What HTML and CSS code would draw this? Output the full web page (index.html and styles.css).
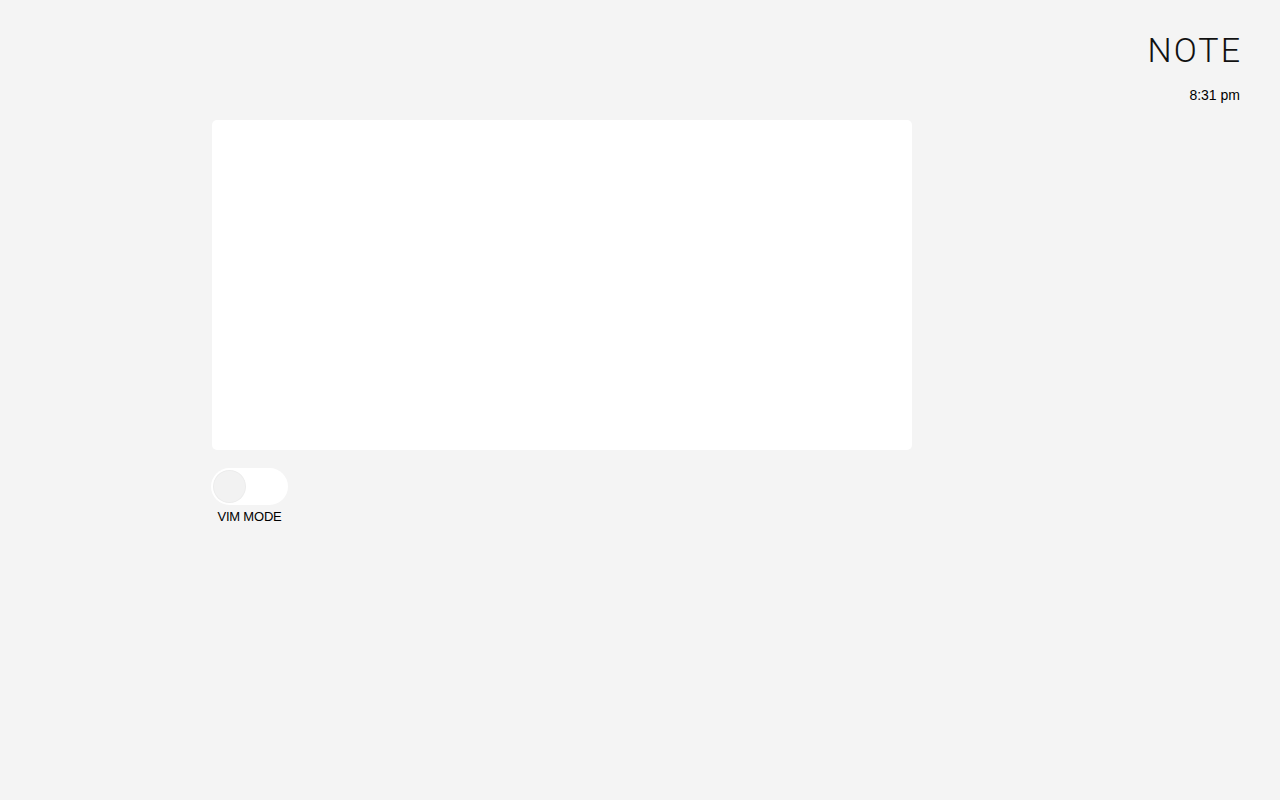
FILE: index.html
```html
<!DOCTYPE html>
<html lang="en">
<head>
    <meta charset="UTF-8">
    <meta name="viewport" content="width=device-width, initial-scale=1.0">
    <title>Note</title>
    <link rel="stylesheet" href="styles.css">
</head>
<body>
    <header id="top-bar">
        <h1 class="title">NOTE</h1>
        <span id="clock" class="clock">8:31 pm</span>
    </header>

    <main id="note-container">
        <textarea id="note-input" class="note-input"></textarea>

        <div class="vim-toggle">
            <label class="switch">
                <input type="checkbox" id="vim-mode">
                <span class="slider"></span>
            </label>
            <span class="switch-label">VIM MODE</span>
        </div>
    </main>
</body>
</html>
```

FILE: styles.css
```css
* { box-sizing: border-box; }
body {
    margin: 0;
    background: #f4f4f4;
    color: #111;
    font-family: 'Liberation Sans', Arial, sans-serif;
}

#top-bar {
    display: flex;
    flex-direction: column;
    align-items: flex-end;
    padding: 31px 40px 0 0;
}
.title {
    margin: 0 -2px 0 0;
    font-family: 'Roboto', 'Liberation Sans', sans-serif;
    font-weight: 300;
    font-size: 34px;
    line-height: 38px;
    letter-spacing: 2px;
    color: #111;
}
.clock {
    margin-top: 18px;
    font-size: 14px;
    line-height: 16px;
    color: #000;
}

#note-container {
    display: flex;
    flex-direction: column;
    align-items: flex-start;
    padding: 17px 0 0 212px;
}
.note-input {
    width: 700px;
    height: 330px;
    border: none;
    border-radius: 5px;
    background: #fff;
    resize: none;
    outline: none;
    padding: 12px;
    font-size: 16px;
}

.vim-toggle {
    display: flex;
    flex-direction: column;
    align-items: center;
    margin: 18px 0 0 -1px;
}
.switch {
    position: relative;
    display: block;
    width: 77px;
    height: 37px;
    cursor: pointer;
}
.switch input { display: none; }
.slider {
    position: absolute;
    inset: 0;
    background: #fff;
    border-radius: 19px;
    transition: background-color 0.3s;
}
.slider::before {
    content: '';
    position: absolute;
    left: 3px;
    top: 3px;
    width: 31px;
    height: 31px;
    border-radius: 50%;
    background: #f2f2f2;
    box-shadow: 0 0 0 1px #ececec;
    transition: transform 0.3s;
}
.switch input:checked + .slider { background: #111; }
.switch input:checked + .slider::before { transform: translateX(40px); }
.switch-label {
    margin-top: 4px;
    font-size: 13px;
    line-height: 16px;
    letter-spacing: -0.2px;
    color: #000;
}
```
